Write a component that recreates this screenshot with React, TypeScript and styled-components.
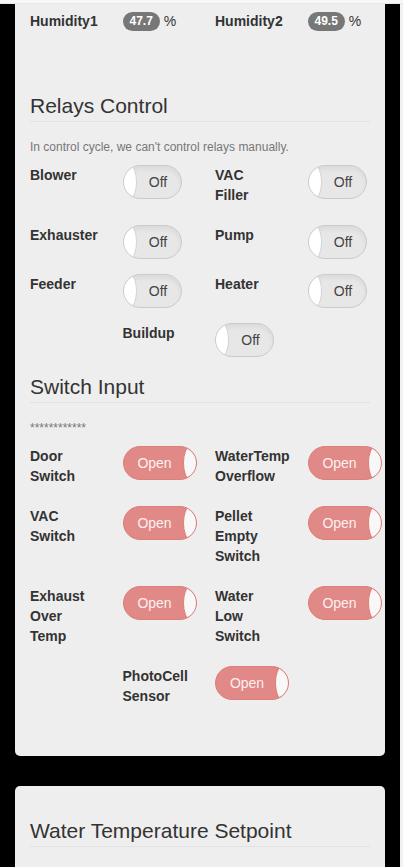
import styled, { createGlobalStyle } from "styled-components";

const GlobalStyle = createGlobalStyle`
  html, body {
    margin: 0;
    padding: 0;
    background: #000;
    overflow: hidden;
    font-family: "Liberation Sans", Arial, Helvetica, sans-serif;
  }
`;

const relays: [string, string][] = [
  ["Blower", "VAC Filler"],
  ["Exhauster", "Pump"],
  ["Feeder", "Heater"],
];

const switches: [string, string][] = [
  ["Door Switch", "WaterTemp Overflow"],
  ["VAC Switch", "Pellet Empty Switch"],
  ["Exhaust Over Temp", "Water Low Switch"],
];

const Toggle = ({ on }: { on: boolean }) => (
  <ToggleBox $on={on}>
    {!on && <Knob $on={on} />}
    <ToggleText $on={on}>{on ? "Open" : "Off"}</ToggleText>
    {on && <Knob $on={on} />}
  </ToggleBox>
);

const App = () => {
  return (
    <Page>
      <GlobalStyle />
      <TopBar />
      <Body>
        <Main>
          <Panel $cut>
            <Row>
              <Label>Humidity1</Label>
              <Value>
                <Badge>47.7</Badge> %
              </Value>
              <Label>Humidity2</Label>
              <Value>
                <Badge>49.5</Badge> %
              </Value>
            </Row>

            <Heading $top={43}>Relays Control</Heading>
            <Note>In control cycle, we can't control relays manually.</Note>
            {relays.map(([a, b]) => (
              <Row key={a}>
                <Label>{a}</Label>
                <Toggle on={false} />
                <Label>{b}</Label>
                <Toggle on={false} />
              </Row>
            ))}
            <Row>
              <Label $start={2}>Buildup</Label>
              <Toggle on={false} />
            </Row>

            <Heading $top={3}>Switch Input</Heading>
            <Note>************</Note>
            {switches.map(([a, b]) => (
              <Row key={a}>
                <Label>{a}</Label>
                <Toggle on />
                <Label>{b}</Label>
                <Toggle on />
              </Row>
            ))}
            <Row $last>
              <Label $start={2}>PhotoCell Sensor</Label>
              <Toggle on />
            </Row>
          </Panel>

          <Panel>
            <Heading $top={18}>Water Temperature Setpoint</Heading>
          </Panel>
        </Main>
        <ScrollStrip />
      </Body>
    </Page>
  );
};

export default App;

const Page = styled.div`
  height: 100vh;
  overflow: hidden;
  display: flex;
  flex-direction: column;
`;

const TopBar = styled.div`
  flex-shrink: 0;
  height: 4px;
  box-sizing: border-box;
  background: #f8f8f8;
  border-bottom: 1px solid #e9e9e9;
`;

const Body = styled.div`
  flex: 1;
  display: flex;
  min-height: 0;
`;

const Main = styled.div`
  flex: 1;
  padding: 0 15px;
  display: flex;
  flex-direction: column;
`;

const ScrollStrip = styled.div`
  width: 3px;
  background: #f1f1f1;
`;

// flex column so that row and heading margins add up instead of collapsing
const Panel = styled.section<{ $cut?: boolean }>`
  flex-shrink: 0;
  display: flex;
  flex-direction: column;
  background: #eeeeee;
  border-radius: ${(p) => (p.$cut ? "0 0 5px 5px" : "5px")};
  padding: ${(p) => (p.$cut ? "7px 15px 45px" : "15px 15px 200px")};
  margin-bottom: 30px;
`;

const Row = styled.div<{ $last?: boolean }>`
  display: grid;
  grid-template-columns: repeat(4, 62.5px);
  column-gap: 30px;
  align-items: start;
  margin-bottom: ${(p) => (p.$last ? 0 : 15)}px;
`;

const Label = styled.div<{ $start?: number }>`
  grid-column-start: ${(p) => p.$start ?? "auto"};
  font-size: 14px;
  line-height: 20px;
  font-weight: bold;
  color: #333;
  margin-bottom: 5px;
`;

const Value = styled.div`
  font-size: 14px;
  line-height: 20px;
  color: #333;
  white-space: nowrap;
`;

const Badge = styled.span`
  display: inline-block;
  padding: 3px 7px;
  font-size: 12px;
  line-height: 13px;
  font-weight: bold;
  color: #fff;
  background: #777;
  border-radius: 10px;
  vertical-align: 1px;
`;

const Heading = styled.h3<{ $top: number }>`
  margin: ${(p) => p.$top}px 0 17px;
  padding-bottom: 3px;
  font-size: 21px;
  line-height: 24px;
  font-weight: normal;
  color: #333;
  border-bottom: 1px solid #e2e2e2;
`;

const Note = styled.p`
  margin: 0 0 9px;
  font-size: 12px;
  line-height: 17px;
  color: #777;
`;

const ToggleBox = styled.div<{ $on: boolean }>`
  display: flex;
  align-items: stretch;
  box-sizing: border-box;
  width: ${(p) => (p.$on ? 74 : 59)}px;
  height: 34px;
  border-radius: 17px;
  overflow: hidden;
  border: 1px solid ${(p) => (p.$on ? "#dd7f7b" : "#cbcbcb")};
  background: ${(p) => (p.$on ? "#e08987" : "#e7e7e7")};
  box-shadow: ${(p) =>
    p.$on ? "none" : "inset 0 3px 5px rgba(0, 0, 0, 0.06)"};
`;

const Knob = styled.span<{ $on: boolean }>`
  flex-shrink: 0;
  width: 14px;
  box-sizing: border-box;
  border-radius: 50%;
  background: ${(p) => (p.$on ? "#f8f8f8" : "#ffffff")};
  border: 1px solid ${(p) => (p.$on ? "#e07b77" : "#d3d3d3")};
  margin: -1px;
`;

const ToggleText = styled.span<{ $on: boolean }>`
  flex: 1;
  display: flex;
  align-items: center;
  justify-content: center;
  font-size: 14px;
  color: ${(p) => (p.$on ? "#fdf0f0" : "#444")};
  padding-left: ${(p) => (p.$on ? 2 : 0)}px;
`;
